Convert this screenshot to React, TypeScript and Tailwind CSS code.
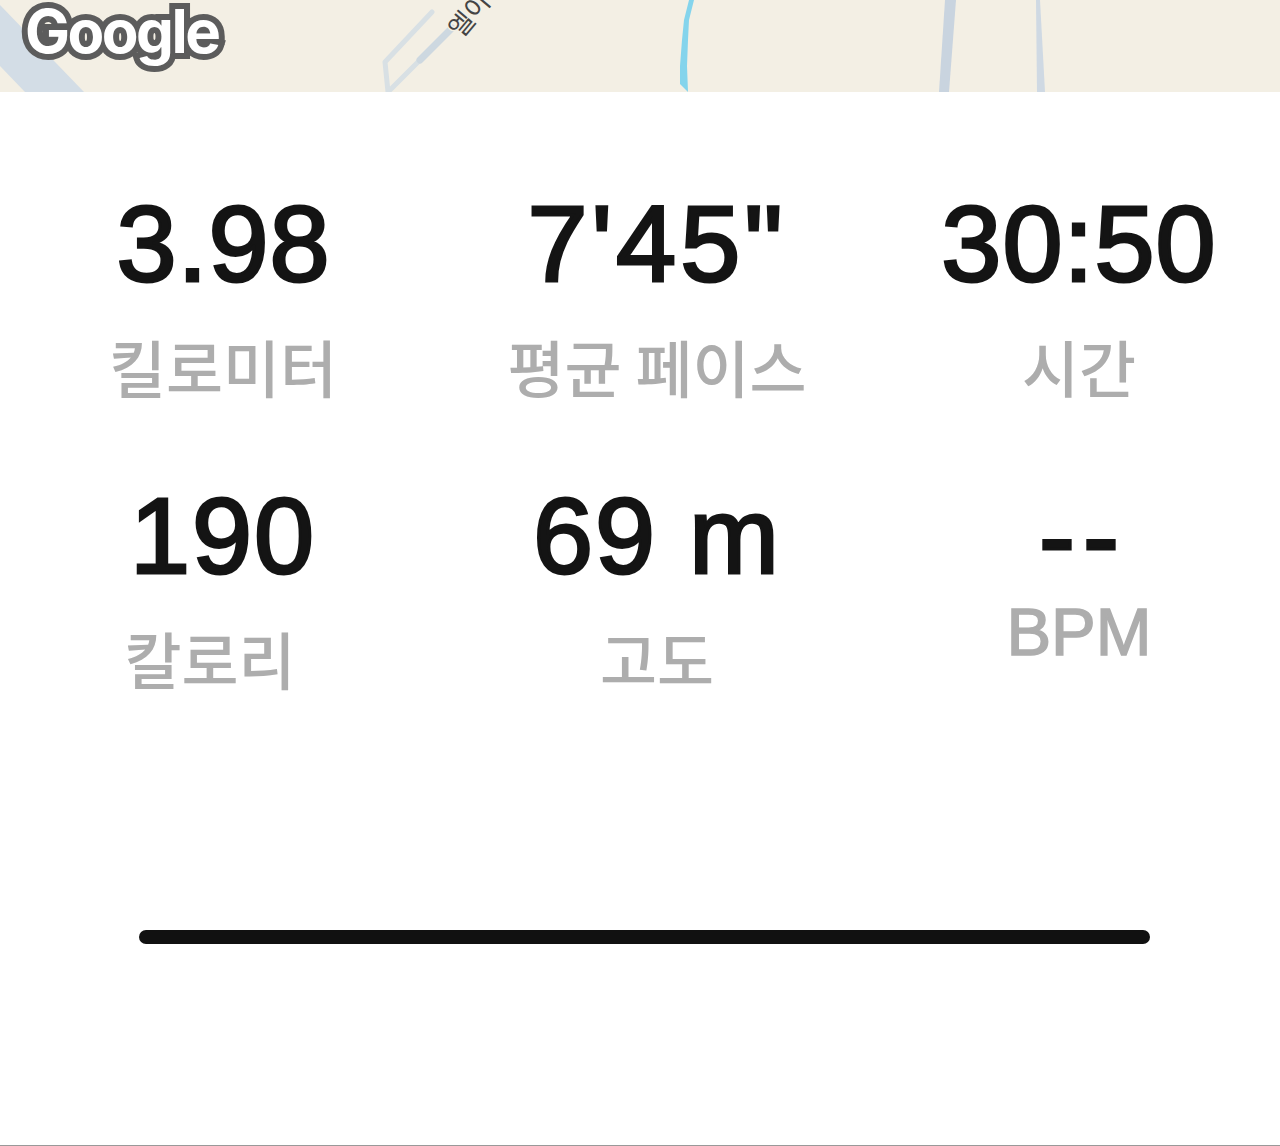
const stats = [
  { value: '3.98', label: '킬로미터', valueClass: 'tracking-[1px] pl-px', labelClass: '' },
  { value: `7'45"`, label: '평균 페이스', valueClass: 'tracking-[4px]', labelClass: '' },
  { value: '30:50', label: '시간', valueClass: 'tracking-[1px]', labelClass: '' },
  { value: '190', label: '칼로리', valueClass: 'tracking-[2px]', labelClass: 'pr-[26px]' },
  { value: '69 m', label: '고도', valueClass: 'tracking-[2px]', labelClass: '' },
  { value: '--', label: 'BPM', valueClass: 'tracking-[8px] pl-[8px]', labelClass: '' },
];

function MapStrip() {
  return (
    <div className="relative h-[92px] overflow-hidden bg-[#f3efe4]">
      <svg className="absolute inset-0" width="1280" height="92" viewBox="0 0 1280 92" fill="none">
        <path d="M0 5L84 92H25L0 66Z" fill="#d3dde6" />
        <path d="M432 12L385 62L388 92L420 60" stroke="#d8e0e4" strokeWidth="5" strokeLinejoin="round" strokeLinecap="round" />
        <path d="M420 60L452 28" stroke="#cdd8e0" strokeWidth="7" strokeLinecap="round" />
        <path d="M689 0L684 20L682 40L680 66L680 84L688 92L687 66L688 40L689 20L694 0Z" fill="#84d4ec" />
        <path d="M945 0H956L949 92H939Z" fill="#c9d4df" />
        <path d="M1036 0H1040L1045 92H1037Z" fill="#cfd9e3" />
      </svg>
      <span className="absolute left-[25px] top-[-5px] font-['Inter','Liberation_Sans',sans-serif] text-[60px] leading-[72px] font-bold tracking-[-2.5px] text-white [-webkit-text-stroke:12px_#5c5c5c] [paint-order:stroke_fill]">
        Google
      </span>
      <span className="absolute left-[444px] top-[-6px] origin-center -rotate-[50deg] font-['Noto_Sans_CJK_KR',sans-serif] text-[26px] leading-[40px] text-[#444] [-webkit-text-stroke:3px_#f3efe4] [paint-order:stroke_fill]">
        엘이
      </span>
    </div>
  );
}

export default function App() {
  return (
    <div className="relative h-[1146px] w-[1280px] overflow-hidden bg-white font-['Liberation_Sans','Noto_Sans_CJK_KR',sans-serif]">
      <MapStrip />
      <div className="grid grid-cols-[406px_462px_382px] grid-rows-[292px_292px] pl-5 pt-[92px]">
        {stats.map((s) => (
          <div key={s.value} className="flex flex-col items-center">
            <div className={`text-[108px] leading-[120px] whitespace-pre text-[#141414] [-webkit-text-stroke:3px_#141414] ${s.valueClass}`}>
              {s.value}
            </div>
            {s.label === 'BPM' ? (
              <div className="mt-[-4px] text-[67px] leading-[80px] text-[#adadad] [-webkit-text-stroke:1.5px_#adadad]">{s.label}</div>
            ) : (
              <div className={`mt-[22px] font-['Noto_Sans_CJK_KR',sans-serif] text-[62px] leading-[80px] font-medium whitespace-pre text-[#adadad] ${s.labelClass}`}>
                {s.label}
              </div>
            )}
          </div>
        ))}
      </div>
      <div className="mt-[162px] ml-[139px] h-[14px] w-[1011px] rounded-full bg-[#111]" />
      <div className="absolute right-0 bottom-0 left-0 h-px bg-[#999]" />
    </div>
  );
}
